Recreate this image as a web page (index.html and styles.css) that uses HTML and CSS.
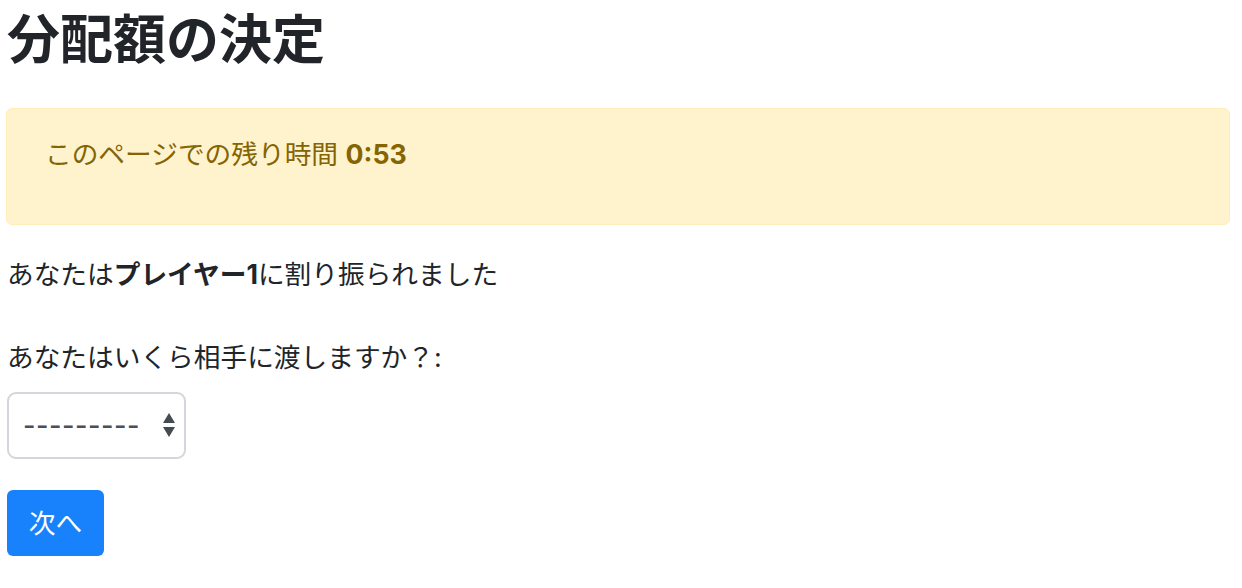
FILE: index.html
```html
<!DOCTYPE html>
<html lang="ja">
<head>
<meta charset="utf-8">
<title>分配額の決定</title>
<link rel="stylesheet" href="styles.css">
</head>
<body>
<div class="container">
  <h2 class="page-title">分配額の決定</h2>
  <div class="alert alert-warning">
    <p class="alert-text">このページでの残り時間 <span class="timer">0:53</span></p>
  </div>
  <p class="info">あなたは<b>プレイヤー1</b>に割り振られました</p>
  <div class="form-group">
    <label class="form-label" for="amount">あなたはいくら相手に渡しますか？:</label>
    <div class="select-wrap">
      <select id="amount" class="form-select">
        <option>---------</option>
      </select>
      <svg class="select-arrows" width="14" height="26" viewBox="0 0 14 26" aria-hidden="true">
        <polygon points="7,1 13,11 1,11" fill="#454b51"/>
        <polygon points="1,15 13,15 7,25" fill="#454b51"/>
      </svg>
    </div>
  </div>
  <button class="btn btn-primary" type="button">次へ</button>
</div>
</body>
</html>
```

FILE: styles.css
```css
html, body {
  margin: 0;
  padding: 0;
  background: #ffffff;
}

body {
  font-family: Inter, "Noto Sans CJK JP", sans-serif;
  font-size: 26.7px;
  line-height: 39px;
  color: #212529;
}

.container {
  padding: 9px 12px 0 7px;
  display: flex;
  flex-direction: column;
  align-items: flex-start;
}

.page-title {
  margin: 0 0 37px 0;
  font-size: 53px;
  line-height: 62px;
  font-weight: 700;
  color: #212529;
}

.alert {
  align-self: stretch;
  margin: 0 0 30px -1px;
  padding: 26px 38px 50px 38px;
  border: 1px solid #ffeeba;
  border-radius: 6px;
  background: #fff3cd;
  color: #856404;
}

.alert-text {
  margin: 0;
}

.timer {
  font-weight: 700;
}

.info {
  margin: 0 0 44px 0;
}

.info b {
  font-weight: 700;
}

.form-group {
  display: flex;
  flex-direction: column;
  align-items: flex-start;
  margin-bottom: 31px;
}

.form-label {
  margin-bottom: 15px;
}

.select-wrap {
  position: relative;
  display: inline-block;
}

.form-select {
  -webkit-appearance: none;
  appearance: none;
  width: 179px;
  height: 67px;
  margin: 0;
  padding: 0 40px 0 14px;
  border: 2px solid #d3d6da;
  border-radius: 9px;
  background: #ffffff;
  font-family: Inter, "Noto Sans CJK JP", sans-serif;
  font-size: 27px;
  font-weight: 500;
  color: #495057;
  letter-spacing: 0.5px;
}

.select-arrows {
  position: absolute;
  right: 10px;
  top: 20px;
  pointer-events: none;
}

.btn {
  display: inline-block;
  width: 97px;
  height: 66px;
  padding: 0;
  border: 0;
  border-radius: 6px;
  font-family: Inter, "Noto Sans CJK JP", sans-serif;
  font-size: 26.7px;
  line-height: 39px;
  cursor: pointer;
}

.btn-primary {
  background: #1782fb;
  color: #ffffff;
}
```
